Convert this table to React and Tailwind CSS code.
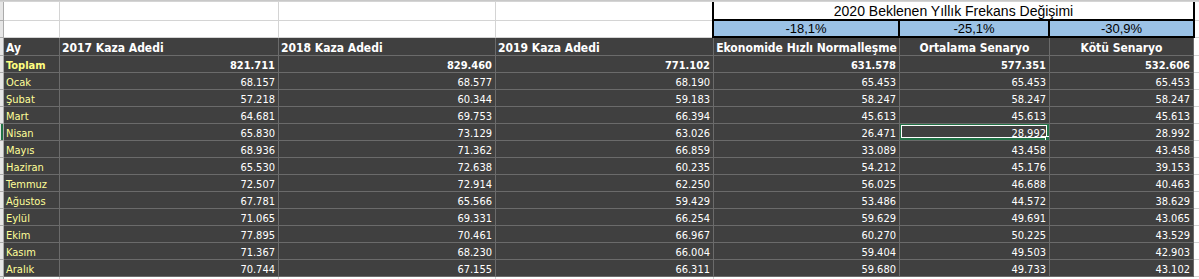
const rows = [
  ['Ocak', '68.157', '68.577', '68.190', '65.453', '65.453', '65.453'],
  ['Şubat', '57.218', '60.344', '59.183', '58.247', '58.247', '58.247'],
  ['Mart', '64.681', '69.753', '66.394', '45.613', '45.613', '45.613'],
  ['Nisan', '65.830', '73.129', '63.026', '26.471', '28.992', '28.992'],
  ['Mayıs', '68.936', '71.362', '66.859', '33.089', '43.458', '43.458'],
  ['Haziran', '65.530', '72.638', '60.235', '54.212', '45.176', '39.153'],
  ['Temmuz', '72.507', '72.914', '62.250', '56.025', '46.688', '40.463'],
  ['Ağustos', '67.781', '65.566', '59.429', '53.486', '44.572', '38.629'],
  ['Eylül', '71.065', '69.331', '66.254', '59.629', '49.691', '43.065'],
  ['Ekim', '77.895', '70.461', '66.967', '60.270', '50.225', '43.529'],
  ['Kasım', '71.367', '68.230', '66.004', '59.404', '49.503', '42.903'],
  ['Aralık', '70.744', '67.155', '66.311', '59.680', '49.733', '43.102'],
];

const total = ['Toplam', '821.711', '829.460', '771.102', '631.578', '577.351', '532.606'];

// column widths incl. right gridline
const widths = ['w-[56px]', 'w-[219px]', 'w-[217px]', 'w-[218px]', 'w-[186px]', 'w-[150px]', 'w-[144px]'];

const sheetFont = "[font-family:'DejaVu_Sans_Condensed','DejaVu_Sans',sans-serif] [font-stretch:condensed]";
const arial = "[font-family:'Liberation_Sans',Arial,sans-serif]";

function RowHead({ selected }) {
  return (
    <div className="w-[4px] shrink-0 flex bg-[#e6e6e6] border-r border-b border-[#ababab]">
      <div className="flex-1" />
      {selected && <div className="w-[2px] bg-[#217346]" />}
    </div>
  );
}

function Cell({ i, children, first, bold, selected }) {
  return (
    <div
      className={`${widths[i]} shrink-0 relative flex items-end border-r border-b border-[#6b6b6b] overflow-hidden ${
        i === 0 ? 'justify-start pl-[2px]' : 'justify-end pr-[3px]'
      } ${first ? (bold ? 'text-[#ffff80] font-bold' : 'text-[#ffff99]') : bold ? 'text-white font-bold' : 'text-white'}`}
    >
      <span className="text-[11px] leading-[13px] whitespace-nowrap">{children}</span>
      {selected && (
        <>
          <div className="absolute -top-[1px] -left-[1px] right-0 bottom-0 border-2 border-[#217346]">
            <div className="w-full h-full border border-white" />
          </div>
          <div className="absolute -right-[1px] -bottom-[1px] w-[5px] h-[5px] bg-[#217346] border border-white" />
        </>
      )}
    </div>
  );
}

function DataRow({ r, bold, selectedRow }) {
  return (
    <div className="flex h-[17px]">
      <RowHead selected={selectedRow} />
      {r.map((v, i) => (
        <Cell key={i} i={i} first={i === 0} bold={bold} selected={selectedRow && i === 5}>
          {v}
        </Cell>
      ))}
      <div className="flex-1 bg-white border-b border-[#d4d4d4]" />
    </div>
  );
}

export default function App() {
  const heads = ['Ay', '2017 Kaza Adedi', '2018 Kaza Adedi', '2019 Kaza Adedi', 'Ekonomide Hızlı Normalleşme', 'Ortalama Senaryo', 'Kötü Senaryo'];

  return (
    <div className={`w-[1199px] h-[279px] overflow-hidden bg-white ${sheetFont}`}>
      <div className="h-[2px] border-b border-[#d4d4d4] bg-[#c8c8c8]" />

      <div className="flex h-[36px]">
        <div className="flex flex-col">
          {[0, 1].map(k => (
            <div key={k} className={`flex ${k === 0 ? 'h-[19px]' : 'h-[17px]'}`}>
              <div className="w-[4px] bg-[#e6e6e6] border-r border-b border-[#ababab]" />
              <div className="w-[56px] border-r border-b border-[#d4d4d4]" />
              <div className="w-[219px] border-r border-b border-[#d4d4d4]" />
              <div className="w-[217px] border-r border-b border-[#d4d4d4]" />
              <div className="w-[216px] border-b border-[#d4d4d4]" />
            </div>
          ))}
        </div>

        <div className={`w-[483px] flex flex-col border-x-2 border-black text-black ${arial}`}>
          <div className="h-[19px] border-b-2 border-black bg-white flex items-end justify-center">
            <span className="text-[14px] leading-[15px]">2020 Beklenen Yıllık Frekans Değişimi</span>
          </div>
          <div className="h-[17px] flex border-b-2 border-black bg-[#9bc2e6]">
            <div className="w-[184px] flex items-end justify-center">
              <span className="text-[13px] leading-[14px]">-18,1%</span>
            </div>
            <div className="w-[150px] border-l-2 border-black flex items-end justify-center">
              <span className="text-[13px] leading-[14px]">-25,1%</span>
            </div>
            <div className="flex-1 border-l-2 border-black flex items-end justify-center">
              <span className="text-[13px] leading-[14px]">-30,9%</span>
            </div>
          </div>
        </div>

        <div className="flex-1 flex flex-col">
          <div className="h-[19px] border-b border-[#d4d4d4]" />
          <div className="h-[17px] border-b border-[#d4d4d4]" />
        </div>
      </div>

      <div className="bg-[#404040]">
        <div className="flex h-[18px]">
          <RowHead />
          {heads.map((h, i) => (
            <div
              key={h}
              className={`${widths[i]} shrink-0 flex items-end border-r border-b border-[#6b6b6b] text-white font-bold overflow-hidden ${
                i < 4 ? 'justify-start pl-[2px]' : 'justify-center'
              }`}
            >
              <span className="text-[12px] leading-[14px] whitespace-nowrap">{h}</span>
            </div>
          ))}
          <div className="flex-1 bg-white border-b border-[#d4d4d4]" />
        </div>

        <DataRow r={total} bold />
        {rows.map(r => (
          <DataRow key={r[0]} r={r} selectedRow={r[0] === 'Nisan'} />
        ))}
      </div>

      <div className="flex h-[2px]">
        <div className="w-[4px] bg-[#e6e6e6] border-r border-[#ababab]" />
        <div className="w-[56px] border-r border-[#d4d4d4]" />
        <div className="w-[219px] border-r border-[#d4d4d4]" />
        <div className="w-[217px] border-r border-[#d4d4d4]" />
        <div className="w-[218px] border-r border-[#d4d4d4]" />
      </div>
    </div>
  );
}
